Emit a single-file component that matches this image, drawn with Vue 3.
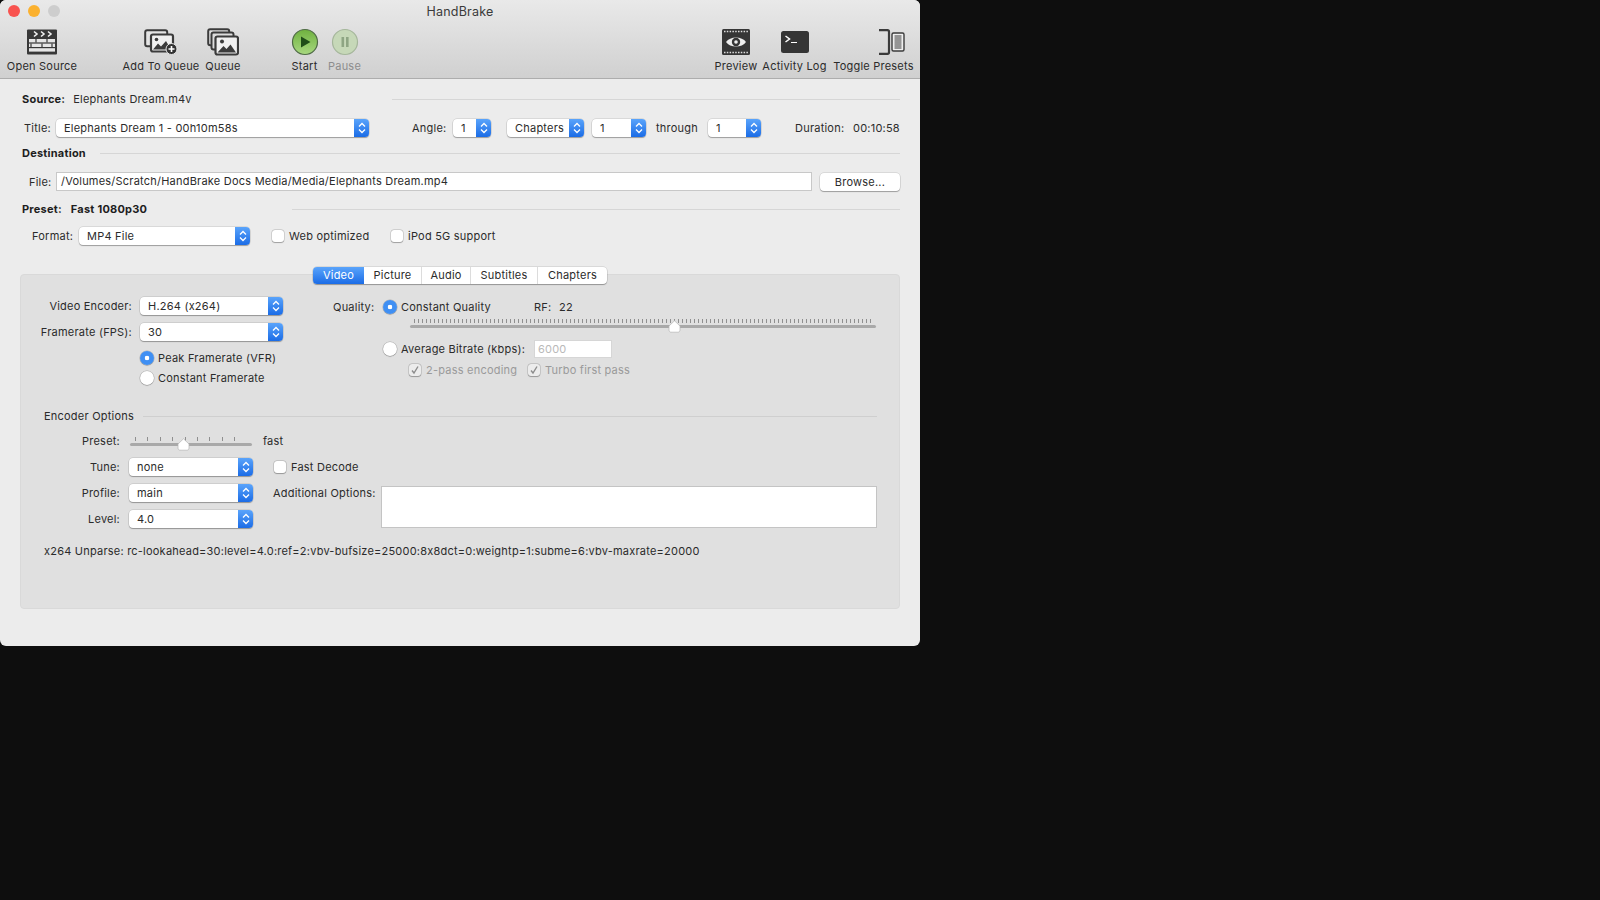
<script setup>
const tools = [
  { id: 'open', label: 'Open Source', w: 68, ml: 0 },
  { id: 'add', label: 'Add To Queue', w: 74, ml: 48 },
  { id: 'queue', label: 'Queue', w: 34, ml: 8 },
  { id: 'start', label: 'Start', w: 25, ml: 52 },
  { id: 'pause', label: 'Pause', w: 31, ml: 12, dim: true },
  { id: 'preview', label: 'Preview', w: 40, ml: 356 },
  { id: 'log', label: 'Activity Log', w: 61, ml: 8 },
  { id: 'toggle', label: 'Toggle Presets', w: 77, ml: 10 }
]
const tabs = ['Video', 'Picture', 'Audio', 'Subtitles', 'Chapters']
</script>

<template>
  <div class="page">
    <div class="window">
      <header class="chrome">
        <div class="titlebar">
          <div class="lights"><i class="red"></i><i class="yellow"></i><i class="gray"></i></div>
          <span class="wintitle">HandBrake</span>
        </div>
        <div class="toolbar">
          <div v-for="t in tools" :key="t.id" class="tool" :class="{ dim: t.dim }" :style="{ width: t.w + 'px', marginLeft: t.ml + 'px' }">
            <div class="icon">
              <svg v-if="t.id === 'open'" width="32" height="26" viewBox="0 0 32 26">
                <rect x="1" y="0.5" width="30" height="25" rx="1" fill="#383838"/>
                <path d="M8 2.5l3 2.5-3 2.5M15 2.5l3 2.5-3 2.5M22 2.5l3 2.5-3 2.5" fill="none" stroke="#eee" stroke-width="1.6"/>
                <rect x="3" y="10" width="26" height="3.4" fill="#e6e6e6"/>
                <rect x="3" y="14.6" width="26" height="3.4" fill="#e6e6e6"/>
                <rect x="3" y="19.2" width="26" height="3.4" fill="#e6e6e6"/>
                <path d="M10 10v3.400M21 10v3.400M5 14.600v3.400M16 14.600v3.400M26 14.600v3.400" stroke="#383838" stroke-width="1.200"/>
              </svg>
              <svg v-else-if="t.id === 'add'" width="34" height="26" viewBox="0 0 34 26">
                <rect x="1.200" y="1.200" width="22" height="16" rx="2" fill="#e4e4e4" stroke="#3b3b3b" stroke-width="2"/>
                <rect x="7" y="5.500" width="22" height="17" rx="2" fill="#f0f0f0" stroke="#3b3b3b" stroke-width="2.200"/>
                <path d="M9 20.500l5-6 3 3 5-5.500 5 8.500z" fill="#3b3b3b"/>
                <circle cx="12.500" cy="10.500" r="1.800" fill="#3b3b3b"/>
                <circle cx="27.500" cy="20" r="5.500" fill="#333" stroke="#e6e6e6"/>
                <path d="M27.500 17v6M24.500 20h6" stroke="#fff" stroke-width="1.600"/>
              </svg>
              <svg v-else-if="t.id === 'queue'" width="32" height="28" viewBox="0 0 32 28">
                <rect x="1.200" y="1.200" width="21" height="16" rx="2" fill="#ddd" stroke="#3b3b3b" stroke-width="2"/>
                <rect x="4.500" y="4.500" width="22" height="17" rx="2" fill="#ddd" stroke="#3b3b3b" stroke-width="2"/>
                <rect x="8.500" y="8.500" width="22.500" height="18" rx="2" fill="#f0f0f0" stroke="#3b3b3b" stroke-width="2.200"/>
                <path d="M10.500 24.500l6-6.500 3 3 4-4.500 5.500 8z" fill="#3b3b3b"/>
                <circle cx="15" cy="13.500" r="2" fill="#3b3b3b"/>
              </svg>
              <svg v-else-if="t.id === 'start'" width="28" height="28" viewBox="0 0 28 28">
                <defs>
                  <linearGradient id="gs" x1="0" y1="0" x2="0" y2="1">
                    <stop offset="0" stop-color="#6fb13f"/><stop offset="1" stop-color="#a8d880"/>
                  </linearGradient>
                </defs>
                <circle cx="14" cy="14" r="12.500" fill="url(#gs)" stroke="#4f6b45" stroke-width="1.200"/>
                <path d="M10 8.500l9.500 5.500L10 19.500z" fill="#1f4d18"/>
              </svg>
              <svg v-else-if="t.id === 'pause'" width="28" height="28" viewBox="0 0 28 28">
                <circle cx="14" cy="14" r="12.500" fill="#c6d8b8" stroke="#a5b69b" stroke-width="1.200"/>
                <path d="M10.500 9h2.600v10h-2.600zM15 9h2.600v10H15z" fill="#8ea583"/>
              </svg>
              <svg v-else-if="t.id === 'preview'" width="28" height="26" viewBox="0 0 28 26">
                <rect width="28" height="26" rx="1.500" fill="#363636"/>
                <path d="M2 2.500h24M2 23.500h24" stroke="#ddd" stroke-width="1.600" stroke-dasharray="1.500 1.300"/>
                <path d="M4 13c4-6 16-6 20 0-4 6-16 6-20 0z" fill="#eee"/>
                <circle cx="14" cy="13" r="4.200" fill="#363636"/>
                <circle cx="14" cy="13" r="1.800" fill="#eee"/>
              </svg>
              <svg v-else-if="t.id === 'log'" width="28" height="22" viewBox="0 0 28 22">
                <rect width="28" height="22" rx="2.500" fill="#353535"/>
                <path d="M4.500 5l4 3-4 3" fill="none" stroke="#fff" stroke-width="1.500"/>
                <path d="M10 11.500h6" stroke="#fff" stroke-width="1.200"/>
              </svg>
              <svg v-else width="26" height="26" viewBox="0 0 26 26" class="toggle-ic">
                <path d="M0 1.200h8.500c1 0 1.500.5 1.500 1.500v20.600c0 1-.5 1.500-1.500 1.500H0" fill="none" stroke="#3b3b3b" stroke-width="2.200"/>
                <rect x="13" y="4" width="12" height="18" rx="1.500" fill="#efefef" stroke="#3b3b3b" stroke-width="1.400"/>
                <path d="M15.500 7h7M15.500 9h7M15.500 11h7M15.500 13h7M15.500 15h7M15.500 17h7M15.500 19h7" stroke="#3b3b3b" stroke-width="1"/>
              </svg>
            </div>
            <span class="tool-label">{{ t.label }}</span>
          </div>
        </div>
      </header>

      <main class="content">
        <div class="sec source-row">
          <div class="sec-text source-text"><b>Source:</b><span class="src-name">Elephants Dream.m4v</span></div>
          <div class="line"></div>
        </div>

        <div class="row title-row">
          <span class="l-title">Title:</span>
          <div class="popup p-title"><span>Elephants Dream 1 - 00h10m58s</span><i class="step"><svg viewBox="0 0 8 12"><path d="M1 4.500 4 1.500 7 4.500M1 7.500 4 10.500 7 7.500"/></svg></i></div>
          <span class="l-angle">Angle:</span>
          <div class="popup p-angle"><span>1</span><i class="step"><svg viewBox="0 0 8 12"><path d="M1 4.500 4 1.500 7 4.500M1 7.500 4 10.500 7 7.500"/></svg></i></div>
          <div class="popup p-chapters"><span>Chapters</span><i class="step"><svg viewBox="0 0 8 12"><path d="M1 4.500 4 1.500 7 4.500M1 7.500 4 10.500 7 7.500"/></svg></i></div>
          <div class="popup p-from"><span>1</span><i class="step"><svg viewBox="0 0 8 12"><path d="M1 4.500 4 1.500 7 4.500M1 7.500 4 10.500 7 7.500"/></svg></i></div>
          <span class="l-through">through</span>
          <div class="popup p-to"><span>1</span><i class="step"><svg viewBox="0 0 8 12"><path d="M1 4.500 4 1.500 7 4.500M1 7.500 4 10.500 7 7.500"/></svg></i></div>
          <span class="l-duration">Duration:</span>
          <span class="l-time">00:10:58</span>
        </div>

        <div class="sec dest-row">
          <div class="sec-text dest-text"><b>Destination</b></div>
          <div class="line"></div>
        </div>

        <div class="row file-row">
          <span class="l-file">File:</span>
          <div class="field f-file">/Volumes/Scratch/HandBrake Docs Media/Media/Elephants Dream.mp4</div>
          <div class="button">Browse...</div>
        </div>

        <div class="sec preset-row">
          <div class="sec-text preset-text"><b>Preset:</b><b class="preset-name">Fast 1080p30</b></div>
          <div class="line"></div>
        </div>

        <div class="row format-row">
          <span class="l-format">Format:</span>
          <div class="popup p-format"><span>MP4 File</span><i class="step"><svg viewBox="0 0 8 12"><path d="M1 4.500 4 1.500 7 4.500M1 7.500 4 10.500 7 7.500"/></svg></i></div>
          <label class="check c-web"><i class="box"></i>Web optimized</label>
          <label class="check c-ipod"><i class="box"></i>iPod 5G support</label>
        </div>

        <section class="panel">
          <div class="tabs">
            <div v-for="(t, i) in tabs" :key="t" class="tab" :class="['t' + i, { on: i === 0 }]">{{ t }}</div>
          </div>

          <div class="upper">
            <div class="upper-left">
              <span class="rlabel">Video Encoder:</span>
              <div class="popup"><span>H.264 (x264)</span><i class="step"><svg viewBox="0 0 8 12"><path d="M1 4.500 4 1.500 7 4.500M1 7.500 4 10.500 7 7.500"/></svg></i></div>
              <span class="rlabel">Framerate (FPS):</span>
              <div class="popup"><span>30</span><i class="step"><svg viewBox="0 0 8 12"><path d="M1 4.500 4 1.500 7 4.500M1 7.500 4 10.500 7 7.500"/></svg></i></div>
              <div class="radios">
                <label class="radio-row"><i class="radio on"></i>Peak Framerate (VFR)</label>
                <label class="radio-row"><i class="radio"></i>Constant Framerate</label>
              </div>
            </div>

            <div class="upper-right">
              <div class="q-row">
                <span class="q-label">Quality:</span>
                <label class="radio-row q-radio"><i class="radio on"></i>Constant Quality</label>
                <span class="rf">RF:</span><span class="rf-val">22</span>
              </div>
              <div class="slider q-slider">
                <div class="ticks"></div>
                <div class="track"></div>
                <svg class="knob q-knob" width="13" height="13" viewBox="0 0 13 13"><path d="M6.500.8 12 6v4c0 1.500-1 2.200-2.200 2.200H3.200C2 12.200 1 11.500 1 10V6z" fill="#fff" stroke="#b5b5b5" stroke-width=".7"/></svg>
              </div>
              <div class="avg-row">
                <label class="radio-row q-radio"><i class="radio"></i>Average Bitrate (kbps):</label>
                <div class="field f-bitrate">6000</div>
              </div>
              <div class="pass-row">
                <label class="check c-pass"><i class="box checked"><svg viewBox="0 0 12 12"><path d="M3 6.500 5 9l4-6.500" fill="none" stroke="#8c8c8c" stroke-width="1.400"/></svg></i>2-pass encoding</label>
                <label class="check c-turbo"><i class="box checked"><svg viewBox="0 0 12 12"><path d="M3 6.500 5 9l4-6.500" fill="none" stroke="#8c8c8c" stroke-width="1.400"/></svg></i>Turbo first pass</label>
              </div>
            </div>
          </div>

          <div class="enc-head">
            <span>Encoder Options</span>
            <div class="line"></div>
          </div>

          <div class="enc-grid">
            <span class="rlabel">Preset:</span>
            <div class="slider p-slider">
              <div class="ticks t-wide"></div>
              <div class="track"></div>
              <svg class="knob p-knob" width="13" height="13" viewBox="0 0 13 13"><path d="M6.500.8 12 6v4c0 1.500-1 2.200-2.200 2.200H3.200C2 12.200 1 11.500 1 10V6z" fill="#fff" stroke="#b5b5b5" stroke-width=".7"/></svg>
            </div>
            <span class="fast">fast</span>

            <span class="rlabel">Tune:</span>
            <div class="popup"><span>none</span><i class="step"><svg viewBox="0 0 8 12"><path d="M1 4.500 4 1.500 7 4.500M1 7.500 4 10.500 7 7.500"/></svg></i></div>
            <label class="check c-fast"><i class="box"></i>Fast Decode</label>

            <span class="rlabel">Profile:</span>
            <div class="popup"><span>main</span><i class="step"><svg viewBox="0 0 8 12"><path d="M1 4.500 4 1.500 7 4.500M1 7.500 4 10.500 7 7.500"/></svg></i></div>
            <div class="additional">
              <span class="add-label">Additional Options:</span>
              <div class="textarea"></div>
            </div>

            <span class="rlabel">Level:</span>
            <div class="popup"><span>4.0</span><i class="step"><svg viewBox="0 0 8 12"><path d="M1 4.500 4 1.500 7 4.500M1 7.500 4 10.500 7 7.500"/></svg></i></div>
          </div>

          <p class="unparse">x264 Unparse: rc-lookahead=30:level=4.0:ref=2:vbv-bufsize=25000:8x8dct=0:weightp=1:subme=6:vbv-maxrate=20000</p>
        </section>
      </main>
    </div>
  </div>
</template>

<style>
html, body { margin: 0; background: #0e0e0e; }
</style>

<style scoped>
.page {
  width: 1600px;
  height: 900px;
  background: #0e0e0e;
  overflow: hidden;
  font-family: Inter, "Liberation Sans", sans-serif;
  font-size: 11px;
  letter-spacing: 0.22px;
  color: #2b2b2b;
  white-space: nowrap;
}
.window {
  width: 920px;
  height: 646px;
  background: #ececec;
  border-radius: 6px;
  overflow: hidden;
}
.chrome {
  height: 78px;
  background: linear-gradient(#e9e9e9, #d0d0d0);
  border-bottom: 1px solid #adadad;
}
.titlebar {
  height: 23px;
  display: flex;
  align-items: center;
  justify-content: center;
  position: relative;
}
.wintitle { font-size: 12.5px; color: #3a3a3a; }
.lights {
  position: absolute;
  left: 8px;
  top: 5px;
  display: flex;
  gap: 8px;
}
.lights i { width: 12px; height: 12px; border-radius: 50%; }
.red { background: #f8534f; }
.yellow { background: #fbb12f; }
.gray { background: #cdcdcd; }

.toolbar { display: flex; padding-left: 8px; height: 55px; }
.tool {
  display: flex;
  flex-direction: column;
  align-items: center;
  flex: none;
}
.icon {
  height: 37px;
  display: flex;
  align-items: center;
  justify-content: center;
}
.tool-label { font-size: 11px; line-height: 13px; margin-top: 0; }
.tool.dim .tool-label { color: #8d8d8d; }
.toggle-ic { margin-left: 36px; }

.content { display: block; }
.row { display: flex; align-items: center; }
.sec { display: flex; align-items: center; height: 18px; padding-left: 22px; padding-right: 20px; }
.sec b { font-weight: 700; color: #1e1e1e; }
.line { flex: 1; height: 1px; background: #d6d6d6; }
.source-row { margin-top: 11px; }
.source-text { width: 370px; flex: none; }
.src-name { margin-left: 8px; }
.dest-row { margin-top: 7px; }
.dest-text { width: 78px; flex: none; }
.preset-row { margin-top: 9px; }
.preset-text { width: 270px; flex: none; }
.preset-name { margin-left: 9px; }

.popup {
  position: relative;
  height: 18px;
  line-height: 18px;
  background: #fff;
  border-radius: 4px;
  box-shadow: 0 0 0 0.5px rgba(0, 0, 0, 0.16), 0 1px 1px rgba(0, 0, 0, 0.28);
  padding-left: 8px;
  box-sizing: border-box;
  flex: none;
}
.step {
  position: absolute;
  right: 0;
  top: 0;
  bottom: 0;
  width: 15px;
  border-radius: 0 4px 4px 0;
  background: linear-gradient(#5aa4fb, #1b6ce6);
  display: flex;
  align-items: center;
  justify-content: center;
}
.step svg { width: 8px; height: 12px; }
.step path { fill: none; stroke: #fff; stroke-width: 1.3; }

.title-row { margin-top: 11px; padding-left: 24px; height: 18px; }
.l-title { width: 26px; margin-right: 6px; }
.p-title { width: 313px; }
.l-angle { margin-left: 43px; width: 33px; margin-right: 8px; }
.p-angle { width: 38px; }
.p-chapters { width: 77px; margin-left: 16px; }
.p-from { width: 54px; margin-left: 8px; }
.l-through { width: 40px; margin-left: 10px; margin-right: 12px; }
.p-to { width: 53px; }
.l-duration { width: 48px; margin-left: 34px; margin-right: 10px; }

.file-row { margin-top: 10px; height: 19px; padding-left: 29px; }
.l-file { width: 21px; margin-right: 6px; }
.field {
  box-sizing: border-box;
  background: #fff;
  border: 1px solid #c8c8c8;
  flex: none;
}
.f-file { width: 756px; height: 19px; line-height: 17px; padding-left: 4px; }
.button {
  width: 80px;
  height: 18px;
  line-height: 18px;
  margin-left: 8px;
  text-align: center;
  background: #fff;
  border-radius: 4px;
  box-shadow: 0 0 0 0.5px rgba(0, 0, 0, 0.16), 0 1px 1px rgba(0, 0, 0, 0.28);
}

.format-row { margin-top: 9px; height: 18px; padding-left: 32px; }
.l-format { width: 40px; margin-right: 7px; }
.p-format { width: 171px; }
.check { display: flex; align-items: center; flex: none; }
.box {
  width: 12px;
  height: 12px;
  box-sizing: border-box;
  background: #fff;
  border-radius: 3px;
  box-shadow: 0 0 0 0.5px rgba(0, 0, 0, 0.2), 0 0.5px 1px rgba(0, 0, 0, 0.25);
  margin-right: 5px;
  flex: none;
  display: block;
}
.box svg { display: block; width: 12px; height: 12px; }
.c-web { margin-left: 22px; width: 119px; }
.c-ipod { }

.panel {
  margin: 29px 20px 0;
  height: 335px;
  box-sizing: border-box;
  background: #e0e0e0;
  border: 1px solid #d9d9d9;
  border-radius: 4px;
  width: 880px;
}
.tabs {
  display: flex;
  width: 294px;
  height: 17px;
  margin: -8px auto 0;
  background: #fff;
  border-radius: 4px;
  box-shadow: 0 0 0 0.5px rgba(0, 0, 0, 0.16), 0 1px 1px rgba(0, 0, 0, 0.28);
  position: relative;
}
.tab {
  text-align: center;
  line-height: 17px;
  border-right: 1px solid #dcdcdc;
  box-sizing: border-box;
}
.t0 { width: 51px; }
.t1 { width: 58px; }
.t2 { width: 49px; }
.t3 { width: 67px; }
.t4 { width: 69px; border-right: 0; }
.tab.on {
  color: #fff;
  background: linear-gradient(#5aa4fb, #1b6ce6);
  border-radius: 4px 0 0 4px;
  border-right: 0;
}

.upper { display: flex; margin-top: 13px; height: 91px; }
.upper-left {
  width: 262px;
  flex: none;
  display: grid;
  grid-template-columns: 111px 143px;
  column-gap: 8px;
  grid-template-rows: 18px 18px auto;
  row-gap: 8px;
  align-items: center;
}
.rlabel { text-align: right; line-height: 18px; }
.radios { grid-column: 2; margin-top: -1px; }
.radio-row { display: flex; align-items: center; height: 20px; }
.radio {
  width: 14px;
  height: 14px;
  box-sizing: border-box;
  border-radius: 50%;
  background: #fff;
  box-shadow: 0 0 0 0.5px rgba(0, 0, 0, 0.2), 0 0.5px 1px rgba(0, 0, 0, 0.3);
  margin-right: 4px;
  flex: none;
  display: block;
}
.radio.on { background: radial-gradient(circle, #fff 0, #fff 2px, #3f8ff3 2.6px); }

.upper-right { margin-left: 50px; width: 546px; flex: none; }
.q-row { display: flex; align-items: center; height: 18px; margin-top: 1px; }
.q-label { width: 40px; margin-right: 10px; }
.q-radio { flex: none; }
.q-row .q-radio { width: 151px; }
.rf { width: 17px; margin-right: 8px; }
.slider { position: relative; flex: none; }
.ticks {
  height: 4px;
  background: repeating-linear-gradient(90deg, #8f8f8f 0, #8f8f8f 1px, transparent 1px, transparent 4px);
  margin: 0 4px;
}
.track { height: 3px; margin-top: 2px; background: #a9a9a9; border-radius: 2px; }
.knob { position: absolute; display: block; top: 1px; }
.q-slider { margin-left: 77px; margin-top: 3px; width: 466px; }
.q-knob { left: 258px; }
.avg-row { display: flex; align-items: center; margin-left: 50px; margin-top: 12px; height: 18px; }
.avg-row .q-radio { width: 151px; }
.f-bitrate {
  width: 78px;
  height: 18px;
  line-height: 16px;
  padding-left: 3px;
  color: #b9b9b9;
  border-color: #d6d6d6;
}
.pass-row { display: flex; align-items: center; margin-left: 76px; margin-top: 3px; height: 18px; color: #9a9a9a; }
.c-pass { width: 119px; }
.c-pass .box, .c-turbo .box { background: #ececec; }

.enc-head {
  display: flex;
  align-items: center;
  height: 18px;
  margin: 19px 22px 0 23px;
}
.enc-head .line { margin-left: 9px; background: #cfcfcf; }

.enc-grid {
  display: grid;
  grid-template-columns: 99px 124px 1fr;
  column-gap: 9px;
  grid-template-rows: 18px 18px 18px 18px;
  row-gap: 8px;
  margin-top: 7px;
  align-items: center;
}
.enc-grid > .rlabel:first-child { margin-bottom: 0; }
.p-slider { width: 122px; margin-left: 1px; margin-top: 1px; }
.t-wide {
  margin: 0 5px;
  background: repeating-linear-gradient(90deg, #8f8f8f 0, #8f8f8f 1px, transparent 1px, transparent 12.400px);
}
.p-knob { left: 47px; }
.fast { margin-left: 1px; }
.c-fast { margin-left: 12px; }
.additional {
  grid-column: 3;
  grid-row: 3 / 5;
  align-self: stretch;
  display: flex;
  margin-left: 11px;
}
.add-label { width: 99px; margin-right: 9px; line-height: 18px; flex: none; }
.textarea {
  width: 496px;
  height: 42px;
  margin-top: 2px;
  background: #fff;
  border: 1px solid #c4c4c4;
  box-sizing: border-box;
}
.enc-grid { grid-auto-flow: row; }
.unparse { margin: 14px 0 0 23px; line-height: 18px; }
</style>
